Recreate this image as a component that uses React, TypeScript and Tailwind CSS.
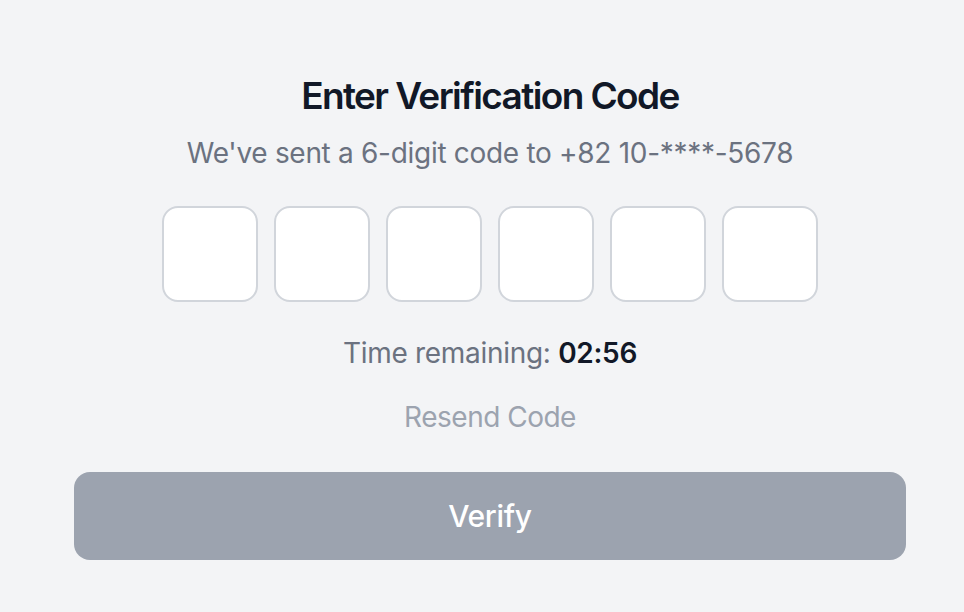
const digits = [0, 1, 2, 3, 4, 5];

const App = () => (
	<div className="min-h-screen w-full bg-[#f3f4f6] pl-4 font-['Inter','Noto_Sans',sans-serif]">
		<div className="mx-auto flex w-[896px] flex-col items-center px-8 pt-[68px]">
			<h1 className="text-[37px] font-semibold leading-[56px] tracking-[-1.6px] text-[#111827]">
				Enter Verification Code
			</h1>
			<p className="mt-[9px] text-[28px] leading-[40px] tracking-[-0.3px] text-[#6b7280]">
				We've sent a 6-digit code to +82 10-****-5678
			</p>

			<div className="mt-[33px] flex flex-row gap-4">
				{digits.map((d) => (
					<input
						key={d}
						type="text"
						maxLength={1}
						className="h-[96px] w-[96px] rounded-2xl border-2 border-[#d1d5db] bg-white text-center text-[40px] outline-none"
					/>
				))}
			</div>

			<p className="mt-[31px] text-[28px] leading-[40px] tracking-[-0.3px] text-[#6b7280]">
				Time remaining: <span className="font-semibold text-[#111827]">02:56</span>
			</p>

			<button className="mt-6 text-[28px] leading-[40px] tracking-[-0.5px] text-[#9ca3af]">
				Resend Code
			</button>

			<button className="mt-[35px] h-[88px] w-full rounded-2xl bg-[#9ca3af] text-[30px] font-medium tracking-[-0.3px] text-white">
				Verify
			</button>
		</div>
	</div>
);

export default App;
